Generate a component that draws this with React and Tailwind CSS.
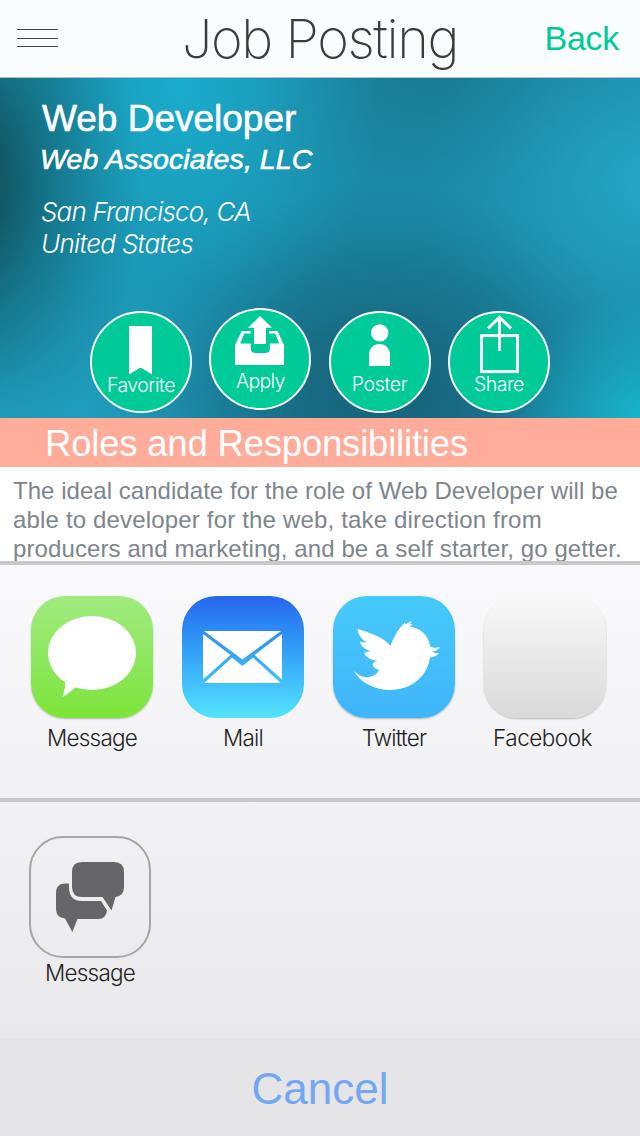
const LIGHT = "font-['Inter','Liberation_Sans',sans-serif] font-light";

function BookmarkIcon() {
  return (
    <svg className="h-[60px] w-[98px] shrink-0 overflow-visible" viewBox="92 312.9 98 60" fill="white">
      <path d="M129 326H152V374.5L140.5 367.3L129 374.5Z" />
    </svg>
  );
}

function TrayIcon() {
  return (
    <svg className="h-[60px] w-[98px] shrink-0 overflow-visible" viewBox="211 310 98 60" fill="white">
      <path d="M260 316L272 327.8H266V344H254V327.8H248Z" />
      <path
        fillRule="evenodd"
        d="M241.7 331H251V333.4H244.3L240.2 343.5H250.8V349C250.8 352 253 353 257 353H264C268 353 269.800 352 269.800 349V343.500H279.300L275.200 333.400H269V331H277.600L284 345V365H235V345Z"
      />
    </svg>
  );
}

function PersonIcon() {
  return (
    <svg className="h-[60px] w-[98px] shrink-0 overflow-visible" viewBox="331 312.9 98 60" fill="white">
      <circle cx="379.7" cy="332.8" r="8.7" />
      <path d="M369 366V355C369 348.5 373.5 344 379.5 344C385.5 344 390 348.5 390 355V366Z" />
    </svg>
  );
}

function ShareIcon() {
  return (
    <svg className="h-[60px] w-[98px] shrink-0 overflow-visible" viewBox="450 312.9 98 60" fill="none" stroke="white" strokeWidth="3">
      <rect x="481.5" y="335.5" width="36" height="36" />
      <path d="M499.5 317.5V351M488 328.3L499.5 317.3L511 328.3" />
    </svg>
  );
}

const actions = [
  { label: "Favorite", Icon: BookmarkIcon, circle: "", text: "tracking-[-0.5px]" },
  { label: "Apply", Icon: TrayIcon, circle: "mb-[3px]", text: "-mt-px tracking-[-0.7px]" },
  { label: "Poster", Icon: PersonIcon, circle: "", text: "-mt-px tracking-[-0.3px]" },
  { label: "Share", Icon: ShareIcon, circle: "", text: "-mt-px tracking-[-0.5px]" },
];

function MessageGlyph() {
  return (
    <svg className="size-full" viewBox="31 596 122 122" fill="white">
      <ellipse cx="92" cy="653" rx="44" ry="37" />
      <path d="M65 679L65.300 683C65.300 688 64 692.500 62.300 697C67.500 694 72 690.500 76 687Z" />
    </svg>
  );
}

function MailGlyph() {
  return (
    <svg className="size-full" viewBox="182 596 122 122" fill="white">
      <path d="M204 631H281L242.400 659.500Z" />
      <path d="M203 634L230.500 655L203 679.500Z" />
      <path d="M282 634L254.500 655L282 679.500Z" />
      <path d="M204.300 683L232 657.600L242.400 666L253 657.600L280.700 683Z" />
    </svg>
  );
}

function BirdGlyph() {
  return (
    <svg className="size-full" viewBox="-51 -42 366 366" fill="white">
      <path d="M23 57C50 65 95 78 122 107C128 88 142 58 166 37L165 43L187 33L178 43L188 42L179 50C212 54 237 76 240 109C252 116 262 113 270 111C266 119 256 124 246 125C254 129 260 130 267 129C260 138 250 142 240 142C232 200 185 240 120 240C70 240 30 215 11 182C30 200 45 202 55 201C70 200 82 190 88 179C75 178 68 170 68 162C68 157 75 153 84 152C60 150 45 140 43 128C50 125 56 124 64 125C45 118 32 108 30 95C36 97 42 97 48 96C32 84 22 70 23 57Z" />
    </svg>
  );
}

const apps = [
  { label: "Message", Glyph: MessageGlyph, tile: "from-[#a0eb7e] to-[#7ce436] shadow-[0_1px_2px_rgba(0,0,0,0.25)]", text: "tracking-[-0.75px]" },
  { label: "Mail", Glyph: MailGlyph, tile: "from-[#2965ee] to-[#55e3fd]", text: "tracking-[-0.8px]" },
  { label: "Twitter", Glyph: BirdGlyph, tile: "from-[#46cafa] to-[#40b5fb] shadow-[0_1px_2px_rgba(0,0,0,0.25)]", text: "tracking-[-0.85px]" },
  { label: "Facebook", Glyph: null, tile: "from-[#f8f8f8] to-[#dadada] shadow-[0_1px_2px_rgba(0,0,0,0.25)]", text: "-ml-[5px] tracking-[-0.5px]" },
];

function ChatGlyph() {
  return (
    <svg className="size-[118px]" viewBox="31 838 118 118" fill="#666668">
      <path d="M82 862H114Q124 862 124 872V887Q124 896 115.500 897L111.500 910.500L102.500 897H82Q72 897 72 887V872Q72 862 82 862Z" />
      <path d="M69 883.500V888Q69.500 901 82 901H101L107 910.500Q106 919 98 919H77.500L72.400 932L65 918.500Q56 917.500 56 909V893Q56 883.500 65 883.500Z" />
    </svg>
  );
}

export default function App() {
  return (
    <div className="flex h-[1136px] w-[640px] flex-col overflow-hidden bg-white font-['Liberation_Sans',Arial,sans-serif] whitespace-nowrap">
      <header className="flex h-[78px] shrink-0 border-b border-[#b5c3c6] bg-[#f9fdff] pr-[21px] pl-[17px]">
        <button aria-label="Menu" className="flex w-[41px] flex-col pt-[29px]">
          <span className="h-px w-full bg-[#444]" />
          <span className="mt-[8px] h-px w-full bg-[#444]" />
          <span className="mt-[7px] h-px w-full bg-[#444]" />
        </button>
        <h1 className="ml-[124px] pt-px font-['Inter','Liberation_Sans',sans-serif] text-[54px] leading-[76px] font-extralight tracking-[-1.4px] text-[#3c3c3c]">
          Job Posting
        </h1>
        <button className="ml-auto text-[34px] leading-[77px] tracking-[-0.3px] text-[#00ca98]">Back</button>
      </header>

      <section className="flex h-[340px] shrink-0 flex-col bg-[#1b89a6] bg-[radial-gradient(ellipse_170px_290px_at_-30px_105px,#0f515e_0%,#115b69_22%,#136a7bb0_48%,#14718650_74%,#14718600_100%),radial-gradient(ellipse_150px_130px_at_650px_345px,#17b8cd_0%,#17b8cd80_45%,#17b8cd00_100%),radial-gradient(ellipse_260px_210px_at_385px_315px,#17637a_0%,#17637ad0_28%,#17637a70_58%,#17637a20_82%,#17637a00_100%),radial-gradient(ellipse_200px_300px_at_180px_10px,#1aabcb_0%,#1aa8c8c0_35%,#1aa8c850_70%,#1aa8c800_100%),radial-gradient(ellipse_240px_200px_at_660px_105px,#27a8c8_0%,#25a6c690_40%,#25a6c630_75%,#25a6c600_100%),radial-gradient(ellipse_260px_240px_at_0px_340px,#22a5c6_0%,#22a5c690_45%,#22a5c600_100%),radial-gradient(ellipse_240px_110px_at_440px_0px,#1a7b94_0%,#1a7b9480_45%,#1a7b9400_100%)] pt-[21px] text-white">
        <div className="flex flex-col pl-[41px]">
          <h2 className="ml-px text-[37px] leading-[40px] [-webkit-text-stroke:0.6px_white]">Web Developer</h2>
          <p className="mt-[2px] -ml-px text-[28.5px] leading-[36px] tracking-[0.08px] italic [-webkit-text-stroke:0.6px_white]">
            Web Associates, LLC
          </p>
          <p className={`${LIGHT} mt-[19px] text-[26px] leading-[32px] tracking-[-0.82px] italic`}>
            San Francisco, CA
            <br />
            <span className="tracking-[-0.7px]">United States</span>
          </p>
        </div>
        <div className="mt-auto flex items-end gap-[17.3px] pb-[5.5px] pl-[90px]">
          {actions.map(({ label, Icon, circle, text }) => (
            <button
              key={label}
              className={`flex size-[102px] shrink-0 flex-col items-center rounded-full border-2 border-white bg-[#00ca98] ${circle}`}
            >
              <Icon />
              <span className={`${LIGHT} text-[19.5px] leading-[24px] ${text}`}>{label}</span>
            </button>
          ))}
        </div>
      </section>

      <h3 className="h-[49px] shrink-0 bg-[#ffac9a] pt-px pl-[45px] text-[36.5px] leading-[49px] tracking-[-0.2px] text-white">
        Roles and Responsibilities
      </h3>

      <p className="flex h-[94px] shrink-0 flex-col overflow-hidden bg-white pt-[9px] pl-[13px] text-[24px] leading-[29px] text-[#7d858d]">
        <span className="tracking-[0.04px]">The ideal candidate for the role of Web Developer will be</span>
        <span className="tracking-[0.17px]">able to developer for the web, take direction from</span>
        <span className="tracking-[0.1px]">producers and marketing, and be a self starter, go getter.</span>
      </p>

      <div className="flex grow flex-col bg-linear-to-b from-[#fafafd] to-[#e9e9eb] text-[#222]">
        <div className="flex h-[241px] shrink-0 gap-[29px] border-y-4 border-[#c8c8ca] pt-[31px] pl-[31px]">
          {apps.map(({ label, Glyph, tile, text }) => (
            <div key={label} className="flex w-[122px] shrink-0 flex-col items-center">
              <div className={`size-[122px] shrink-0 rounded-[34px] bg-linear-to-b ${tile}`}>{Glyph && <Glyph />}</div>
              <span className={`${LIGHT} mt-[6px] text-[22.5px] leading-[28px] ${text}`}>{label}</span>
            </div>
          ))}
        </div>
        <div className="flex pt-[34px] pl-[29px]">
          <div className="flex w-[122px] flex-col items-center">
            <div className="size-[122px] shrink-0 rounded-[34px] border-2 border-[#a5a5a7]">
              <ChatGlyph />
            </div>
            <span className={`${LIGHT} mt-px text-[22.5px] leading-[28px] tracking-[-0.75px]`}>Message</span>
          </div>
        </div>
      </div>

      <button className="h-[98px] shrink-0 bg-[#e5e5e7] pt-[4px] text-[44px] leading-[94px] text-[#74a7f3]">Cancel</button>
    </div>
  );
}
